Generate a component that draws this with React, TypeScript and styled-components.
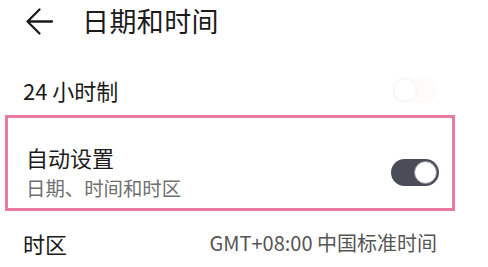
import styled, { createGlobalStyle } from 'styled-components';

const GlobalStyle = createGlobalStyle`
    html, body {
        margin: 0;
        padding: 0;
        background: #ffffff;
    }
    body {
        font-family: "Noto Sans CJK SC", "Noto Sans", sans-serif;
        color: #1b1b1b;
    }
`;

const Toggle = ({ on }: { on: boolean }) => (
    <Track on={on}>
        <Knob on={on} />
    </Track>
);

export default function App() {
    return (
        <>
            <GlobalStyle />
            <Page>
                <Header>
                    <BackButton>
                        <svg width="30" height="30" viewBox="0 0 30 30" fill="none">
                            <path d="M28 14.5H3.5M15.5 2.5L3.5 14.5L15.5 26.5" stroke="#1b1b1b" strokeWidth="2.3" strokeLinecap="round" strokeLinejoin="round" />
                        </svg>
                    </BackButton>
                    <Title>日期和时间</Title>
                </Header>

                <Row>
                    <Label>24 小时制</Label>
                    <Toggle on={false} />
                </Row>

                <Highlight>
                    <TextBlock>
                        <Label>自动设置</Label>
                        <SubLabel>日期、时间和时区</SubLabel>
                    </TextBlock>
                    <Toggle on={true} />
                </Highlight>

                <Row tall>
                    <Label>时区</Label>
                    <Value>GMT+08:00 中国标准时间</Value>
                </Row>
            </Page>
        </>
    );
}

const Page = styled.div`
    width: 488px;
    height: 267px;
    overflow: hidden;
`;

const Header = styled.div`
    display: flex;
    align-items: center;
    height: 42px;
    padding-left: 24px;
`;

const BackButton = styled.div`
    display: flex;
    width: 30px;
    height: 30px;
    margin-top: 1px;
`;

const Title = styled.div`
    margin-left: 28px;
    font-size: 27px;
    line-height: 34px;
    font-weight: 400;
    letter-spacing: 0.4px;
`;

const Row = styled.div<{ tall?: boolean }>`
    display: flex;
    align-items: center;
    justify-content: space-between;
    height: ${p => (p.tall ? '64px' : '50px')};
    margin-top: ${p => (p.tall ? '0' : '23px')};
    padding: 0 51px 0 23px;
`;

const Label = styled.div`
    font-size: 22px;
    line-height: 28px;
    font-weight: 400;
`;

const SubLabel = styled.div`
    font-size: 19.4px;
    line-height: 24px;
    color: #6f6f6f;
`;

const Value = styled.div`
    font-size: 20px;
    line-height: 24px;
    color: #555555;
`;

const Highlight = styled.div`
    display: flex;
    align-items: flex-start;
    justify-content: space-between;
    box-sizing: border-box;
    width: 450px;
    height: 96px;
    margin-left: 5px;
    padding: 25px 13px 0 18px;
    border: 3px solid #ea7aa0;
`;

const TextBlock = styled.div`
    display: flex;
    flex-direction: column;
    gap: 5px;
`;

const Track = styled.div<{ on: boolean }>`
    display: flex;
    align-items: center;
    justify-content: ${p => (p.on ? 'flex-end' : 'flex-start')};
    box-sizing: border-box;
    width: ${p => (p.on ? '48px' : '45px')};
    height: ${p => (p.on ? '27px' : '26px')};
    padding: 0 2px;
    margin-top: ${p => (p.on ? '16px' : '0')};
    border-radius: 14px;
    background: ${p => (p.on ? '#4a4d57' : '#fdfcfa')};
`;

const Knob = styled.div<{ on: boolean }>`
    box-sizing: border-box;
    width: ${p => (p.on ? '23px' : '24px')};
    height: ${p => (p.on ? '23px' : '24px')};
    border-radius: 50%;
    background: #ffffff;
    border: 1px solid ${p => (p.on ? '#8a8c94' : '#f3f3f3')};
    margin-left: ${p => (p.on ? '0' : '-1px')};
`;
